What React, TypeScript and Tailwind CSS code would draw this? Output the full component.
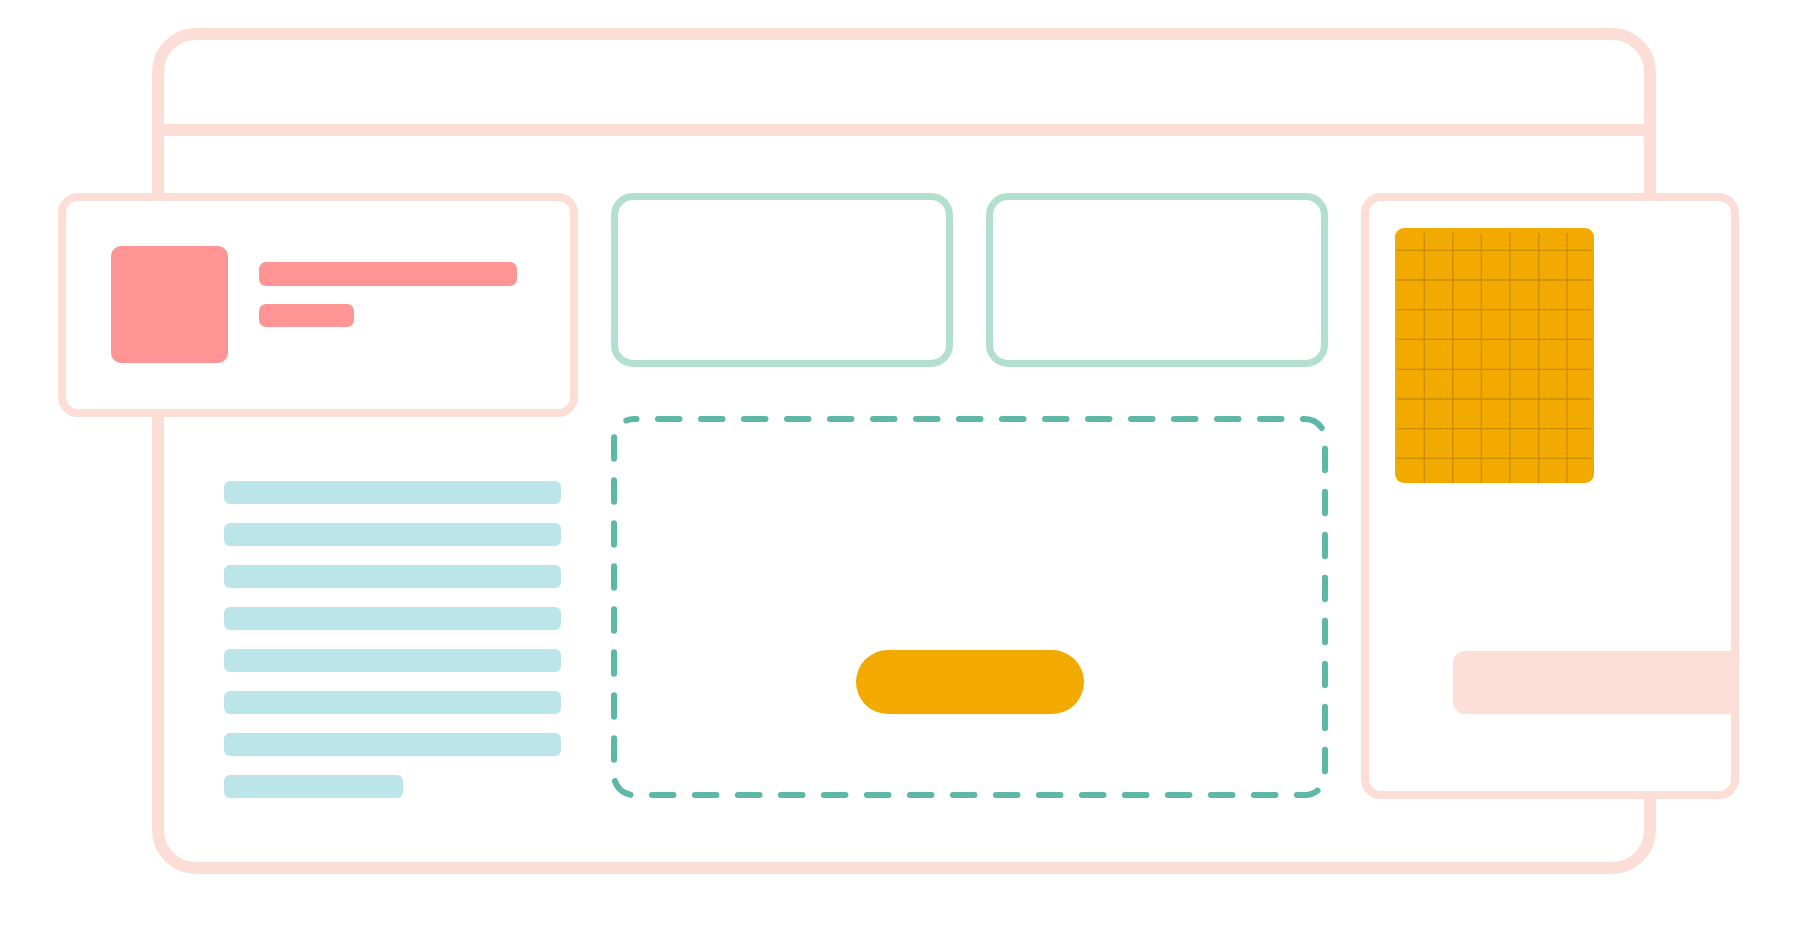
const PEACH = "border-[#fcded6]";

function TealBars() {
  const widths = [337, 337, 337, 337, 337, 337, 337, 179];
  return (
    <div className="ml-[166px] mt-[64px] flex flex-col gap-[19px]">
      {widths.map((w, i) => (
        <div key={i} className="h-[23px] rounded-[6px] bg-[#bbe5e8]" style={{ width: w }} />
      ))}
    </div>
  );
}

function ProfileCard() {
  return (
    <div className={`flex h-[224px] w-[520px] items-start gap-[31px] rounded-[20px] border-[8px] ${PEACH} bg-white pl-[45px] pt-[45px]`}>
      <div className="h-[117px] w-[117px] shrink-0 rounded-[10px] bg-[#fe9594]" />
      <div className="flex flex-col gap-[18px] pt-[16px]">
        <div className="h-[24px] w-[258px] rounded-[7px] bg-[#fe9594]" />
        <div className="h-[23px] w-[95px] rounded-[7px] bg-[#fe9594]" />
      </div>
    </div>
  );
}

function DropZone() {
  return (
    <div className="relative mt-[49px] flex h-[382px] w-[717px] flex-col items-center justify-end pb-[84px]">
      <svg className="absolute inset-0" width="717" height="382" viewBox="0 0 717 382">
        <rect
          x="3"
          y="3"
          width="711"
          height="376"
          rx="20"
          fill="none"
          stroke="#5db8a5"
          strokeWidth="6"
          strokeDasharray="21.5 21.5"
          strokeDashoffset="19"
          strokeLinecap="round"
        />
      </svg>
      <div className="relative h-[64px] w-[228px] rounded-[32px] bg-[#f2a900]" />
    </div>
  );
}

function GridSwatch() {
  const cols = [29.3, 57.7, 86.3, 115, 143.7, 172];
  const rows = [22.3, 52, 81.7, 111.3, 141.3, 171, 200.7, 230.3];
  return (
    <div className="ml-[26px] mt-[27px] h-[255px] w-[199px] overflow-hidden rounded-[9px] bg-[#f2a900]">
      <svg width="199" height="255" viewBox="0 0 199 255">
        {cols.map((x) => (
          <line key={x} x1={x} y1="5" x2={x} y2="255" stroke="#c88e05" strokeWidth="1.3" />
        ))}
        {rows.map((y) => (
          <line key={y} x1="2" y1={y} x2="196" y2={y} stroke="#c88e05" strokeWidth="1.3" />
        ))}
      </svg>
    </div>
  );
}

function SideCard() {
  return (
    <div className={`flex h-[606px] w-[378px] shrink-0 flex-col rounded-[20px] border-[8px] ${PEACH} bg-white`}>
      <GridSwatch />
      <div className="ml-[84px] mt-[168px] h-[63px] rounded-l-[12px] bg-[#fcdfd6]" />
    </div>
  );
}

export default function App() {
  return (
    <div className="h-[935px] w-[1804px] overflow-hidden bg-white">
      <div className={`ml-[152px] mt-[28px] flex h-[846px] w-[1504px] flex-col rounded-[44px] border-[12px] ${PEACH}`}>
        <div className={`h-[96px] shrink-0 border-b-[12px] ${PEACH}`} />
        <div className="-ml-[106px] flex items-start gap-[33px] pt-[57px]">
          <div className="flex w-[520px] shrink-0 flex-col">
            <ProfileCard />
            <TealBars />
          </div>
          <div className="flex w-[717px] shrink-0 flex-col">
            <div className="flex gap-[33px]">
              <div className="h-[174px] w-[342px] rounded-[22px] border-[7.5px] border-[#b3dfcf] bg-white" />
              <div className="h-[174px] w-[342px] rounded-[22px] border-[7.5px] border-[#b3dfcf] bg-white" />
            </div>
            <DropZone />
          </div>
          <SideCard />
        </div>
      </div>
    </div>
  );
}
